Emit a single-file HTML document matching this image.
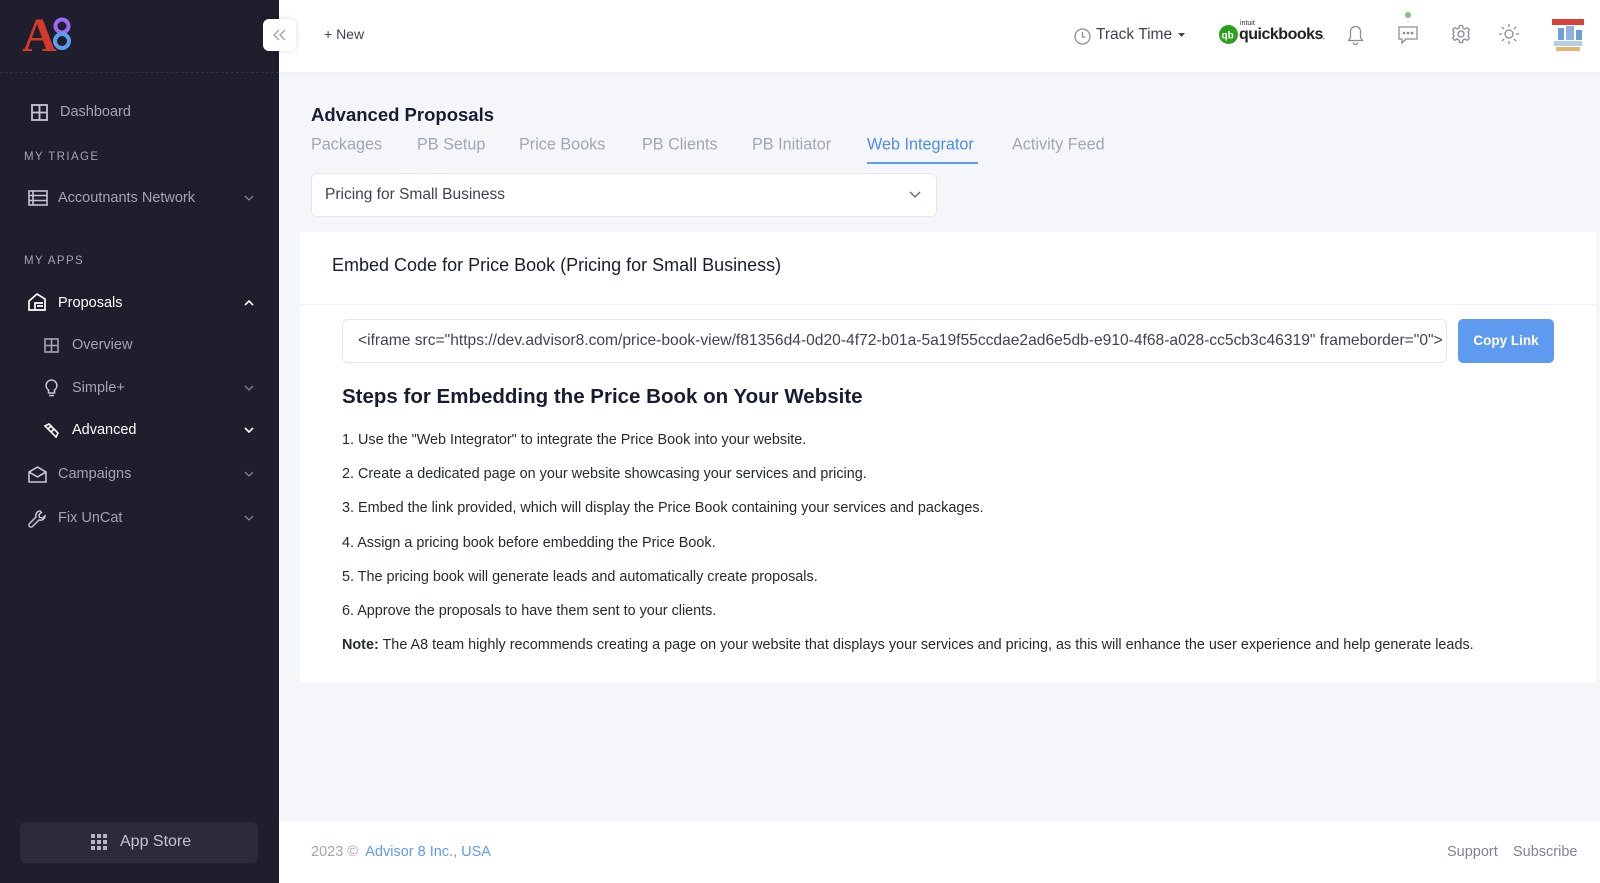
<!DOCTYPE html>
<html><head><meta charset="utf-8"><style>
*{margin:0;padding:0;box-sizing:border-box}
body{width:1600px;height:883px;overflow:hidden;font-family:"Liberation Sans",sans-serif;background:#f5f6f9;position:relative;color:#212529}
.abs{position:absolute;white-space:nowrap}
#sb{position:absolute;left:0;top:0;width:279px;height:883px;background:#1e1e2d}
.nav{position:absolute;font-size:14.5px;color:#a2a3b7;transform:translateY(-50%)}
.sec{position:absolute;font-size:11.5px;letter-spacing:1.4px;color:#a2a3b7;transform:translateY(-50%)}
.chev{position:absolute;left:244px;transform:translateY(-50%)}
.tab{position:absolute;top:145px;transform:translateY(-50%);font-size:16.2px;color:#a1a5b7}
.li{position:absolute;left:342px;font-size:14.4px;color:#252a32;transform:translateY(-50%);white-space:nowrap}
svg{display:block}
</style></head><body>
<div id="sb">
  <div class="abs" style="left:22px;top:8px;font-family:'Liberation Serif',serif;font-size:48px;color:#d33a2c;font-weight:bold">A</div>
  <svg class="abs" style="left:50px;top:17px" width="24" height="34" viewBox="0 0 24 34"><circle cx="12" cy="9" r="6.5" fill="none" stroke="#9b6cf0" stroke-width="4"/><circle cx="12" cy="24" r="7" fill="none" stroke="#5aa0ee" stroke-width="4"/></svg>
  <div style="position:absolute;left:0;top:72px;width:279px;border-top:1px dashed #33344a"></div>
  <svg class="abs" style="left:31px;top:104px" width="17" height="17" viewBox="0 0 17 17" fill="none" stroke="#c4c5d2" stroke-width="1.8"><rect x="1" y="1" width="15" height="15"/><path d="M8.5 1v15M1 8.5h15"/></svg>
  <div class="nav" style="left:60px;top:112px">Dashboard</div>
  <div class="sec" style="left:24px;top:157px">MY TRIAGE</div>
  <svg class="abs" style="left:28px;top:190px" width="20" height="16" viewBox="0 0 20 16" fill="none" stroke="#c4c5d2" stroke-width="1.6"><rect x="1" y="1" width="18" height="14"/><path d="M1 5.5h18M1 10.5h18M5 1v14"/></svg>
  <div class="nav" style="left:58px;top:198px">Accoutnants Network</div>
  <svg class="chev" style="top:198px" width="10" height="6"><path d="M1 1l4 4 4-4" stroke="#7e8299" stroke-width="1.3" fill="none"/></svg>
  <div class="sec" style="left:24px;top:261px">MY APPS</div>
  <svg class="abs" style="left:27px;top:292px" width="20" height="20" viewBox="0 0 20 20" fill="none" stroke="#fff" stroke-width="1.7"><path d="M2 18V9l8-7 8 5v11H2z"/><path d="M8 18v-7h8M10 14h6"/></svg>
  <div class="nav" style="left:58px;top:303px;color:#fff">Proposals</div>
  <svg class="chev" style="top:303px" width="10" height="6"><path d="M1 5l4-4 4 4" stroke="#fff" stroke-width="1.6" fill="none"/></svg>
  <svg class="abs" style="left:44px;top:338px" width="15" height="15" viewBox="0 0 15 15" fill="none" stroke="#a2a3b7" stroke-width="1.6"><rect x="1" y="1" width="13" height="13"/><path d="M7.5 1v13M1 7.5h13"/></svg>
  <div class="nav" style="left:72px;top:345px">Overview</div>
  <svg class="abs" style="left:45px;top:379px" width="13" height="18" viewBox="0 0 13 18" fill="none" stroke="#c4c5d2" stroke-width="1.6"><path d="M6.5 1a5.5 5.5 0 0 0-3 10v3h6v-3a5.5 5.5 0 0 0-3-10zM4 16.5h5"/></svg>
  <div class="nav" style="left:72px;top:388px">Simple+</div>
  <svg class="chev" style="top:388px" width="10" height="6"><path d="M1 1l4 4 4-4" stroke="#7e8299" stroke-width="1.3" fill="none"/></svg>
  <svg class="abs" style="left:43px;top:422px" width="17" height="17" viewBox="0 0 17 17" fill="none" stroke="#fff" stroke-width="1.6"><path d="M2 4l4-2 9 9-2 4z M5 7l3-3M8 10l3-3"/></svg>
  <div class="nav" style="left:72px;top:430px;color:#fff">Advanced</div>
  <svg class="chev" style="top:430px" width="10" height="6"><path d="M1 1l4 4 4-4" stroke="#fff" stroke-width="1.6" fill="none"/></svg>
  <svg class="abs" style="left:28px;top:466px" width="19" height="17" viewBox="0 0 19 17" fill="none" stroke="#c4c5d2" stroke-width="1.6"><path d="M1 6l8.5-5 8.5 5v10H1z M1 6l8.5 5 8.5-5"/></svg>
  <div class="nav" style="left:58px;top:474px">Campaigns</div>
  <svg class="chev" style="top:474px" width="10" height="6"><path d="M1 1l4 4 4-4" stroke="#7e8299" stroke-width="1.3" fill="none"/></svg>
  <svg class="abs" style="left:28px;top:509px" width="19" height="19" viewBox="0 0 19 19" fill="none" stroke="#c4c5d2" stroke-width="1.5"><path d="M12 2a4.5 4.5 0 0 0-4 6L1.5 14.5a2 2 0 0 0 3 3L11 11a4.5 4.5 0 0 0 6-4l-2.5 2-3-.5-.5-3 2.5-2z"/></svg>
  <div class="nav" style="left:58px;top:518px">Fix UnCat</div>
  <svg class="chev" style="top:518px" width="10" height="6"><path d="M1 1l4 4 4-4" stroke="#7e8299" stroke-width="1.3" fill="none"/></svg>
  <div style="position:absolute;left:20px;top:822px;width:238px;height:41px;border-radius:6px;background:#2b2b3c"></div>
  <svg class="abs" style="left:91px;top:834px" width="16" height="16" viewBox="0 0 16 16" fill="#b5b5c3"><rect x="0" y="0" width="4" height="4"/><rect x="6" y="0" width="4" height="4"/><rect x="12" y="0" width="4" height="4"/><rect x="0" y="6" width="4" height="4"/><rect x="6" y="6" width="4" height="4"/><rect x="12" y="6" width="4" height="4"/><rect x="0" y="12" width="4" height="4"/><rect x="6" y="12" width="4" height="4"/><rect x="12" y="12" width="4" height="4"/></svg>
  <div class="nav" style="left:120px;top:842px;font-size:16px;color:#c4c5d2">App Store</div>
</div>
<!-- header -->
<div style="position:absolute;left:279px;top:0;width:1321px;height:72px;background:#fff;box-shadow:0 2px 6px rgba(0,0,0,0.04)"></div>
<div style="position:absolute;left:263px;top:19px;width:33px;height:32px;background:#fff;border-radius:6px;box-shadow:0 0 6px rgba(0,0,0,0.15)"></div>
<svg class="abs" style="left:273px;top:29px" width="14" height="12"><path d="M6 1L1 6l5 5M12 1L7 6l5 5" stroke="#a1a5b7" stroke-width="1.5" fill="none"/></svg>
<div class="abs" style="left:324px;top:26px;font-size:14px;color:#3f4254">+ New</div>
<svg class="abs" style="left:1074px;top:28px" width="17" height="17" viewBox="0 0 17 17" fill="none" stroke="#8a8d99" stroke-width="1.3"><circle cx="8.5" cy="8.5" r="7.5"/><path d="M8.5 4v5h3"/></svg>
<div class="abs" style="left:1096px;top:26px;font-size:15.5px;color:#3f4254">Track Time</div>
<svg class="abs" style="left:1178px;top:33px" width="7" height="4"><path d="M0 0h7L3.5 4z" fill="#3f4254"/></svg>
<svg class="abs" style="left:1219px;top:25px" width="19" height="19"><circle cx="9.5" cy="9.5" r="9.5" fill="#2ca01c"/><text x="2.5" y="13.5" font-size="10" fill="#fff" font-family="Liberation Sans" font-weight="bold">qb</text></svg>
<div class="abs" style="left:1240px;top:20px;font-size:7px;color:#333">intuit</div>
<div class="abs" style="left:1239px;top:26px;font-size:16px;font-weight:bold;color:#222;letter-spacing:-0.5px">quickbooks<span style="font-size:7px">.</span></div>
<svg class="abs" style="left:1347px;top:25px" width="17" height="20" viewBox="0 0 17 20" fill="none" stroke="#8a8d99" stroke-width="1.3"><path d="M8.5 1.5a5 5 0 0 0-5 5v6l-2 3h14l-2-3v-6a5 5 0 0 0-5-5zM6.5 17.5a2 2 0 0 0 4 0"/></svg>
<div class="abs" style="left:1405px;top:12px;width:6px;height:6px;border-radius:3px;background:#7cc47c"></div>
<svg class="abs" style="left:1398px;top:26px" width="20" height="19" viewBox="0 0 20 19" fill="none" stroke="#8a8d99" stroke-width="1.3"><path d="M1 1h18v12H8l-4 4v-4H1z"/><circle cx="6" cy="7" r=".7" fill="#8a8d99"/><circle cx="10" cy="7" r=".7" fill="#8a8d99"/><circle cx="14" cy="7" r=".7" fill="#8a8d99"/></svg>
<svg class="abs" style="left:1451px;top:24px" width="20" height="20" viewBox="0 0 20 20" fill="none" stroke="#8a8d99" stroke-width="1.3"><circle cx="10" cy="10" r="3"/><path d="M8.5 1.5h3l.5 2.5 2 1 2.3-1.3 2 2L17 8l1 2-1 2 1.3 2.3-2 2L14 15l-2 1-.5 2.5h-3L8 16l-2-1-2.3 1.3-2-2L3 12l-1-2 1-2-1.3-2.3 2-2L6 5l2-1z"/></svg>
<svg class="abs" style="left:1499px;top:24px" width="20" height="20" viewBox="0 0 20 20" fill="none" stroke="#8a8d99" stroke-width="1.3"><circle cx="10" cy="10" r="4"/><path d="M10 0v3M10 17v3M0 10h3M17 10h3M2.9 2.9l2.1 2.1M15 15l2.1 2.1M2.9 17.1L5 15M15 5l2.1-2.1"/></svg>
<svg class="abs" style="left:1550px;top:17px" width="36" height="36" viewBox="0 0 36 36"><rect width="36" height="36" fill="#fff"/><path d="M2 2h32v6H2z" fill="#d9443a"/><rect x="8" y="11" width="6" height="12" fill="#6f9fd6"/><rect x="16" y="9" width="8" height="14" fill="#8fb3dc"/><rect x="26" y="13" width="6" height="10" fill="#6f9fd6"/><rect x="4" y="24" width="28" height="5" fill="#b7cde8"/><rect x="6" y="30" width="24" height="4" fill="#e5b26b"/></svg>
<!-- content -->
<div class="abs" style="left:311px;top:104px;font-size:18.5px;font-weight:600;color:#181c32">Advanced Proposals</div>
<div class="tab" style="left:311px">Packages</div>
<div class="tab" style="left:417px">PB Setup</div>
<div class="tab" style="left:519px">Price Books</div>
<div class="tab" style="left:642px">PB Clients</div>
<div class="tab" style="left:752px">PB Initiator</div>
<div class="tab" style="left:867px;color:#4d8de6">Web Integrator</div>
<div style="position:absolute;left:867px;top:162px;width:111px;height:2px;background:#5b9bf0"></div>
<div class="tab" style="left:1012px">Activity Feed</div>
<div style="position:absolute;left:311px;top:173px;width:626px;height:44px;background:#fff;border:1px solid #e4e6ef;border-radius:6px"></div>
<div class="abs" style="left:325px;top:186px;font-size:15.5px;color:#3f4254">Pricing for Small Business</div>
<svg class="abs" style="left:909px;top:191px" width="12" height="7"><path d="M1 1l5 5 5-5" stroke="#5e6278" stroke-width="1.3" fill="none"/></svg>
<div style="position:absolute;left:300px;top:232px;width:1296px;height:451px;background:#fff"></div>
<div style="position:absolute;left:300px;top:304px;width:1296px;border-top:1px solid #eff2f5"></div>
<div class="abs" style="left:332px;top:255px;font-size:18px;color:#181c32">Embed Code for Price Book (Pricing for Small Business)</div>
<div style="position:absolute;left:342px;top:319px;width:1105px;height:44px;border:1px solid #e4e6ef;border-radius:6px;overflow:hidden;background:#fff">
<div class="abs" style="left:15px;top:12px;font-size:15.6px;color:#3f4254">&lt;iframe src="https://dev.advisor8.com/price-book-view/f81356d4-0d20-4f72-b01a-5a19f55ccdae2ad6e5db-e910-4f68-a028-cc5cb3c46319" frameborder="0"&gt;</div></div>
<div style="position:absolute;left:1458px;top:319px;width:96px;height:44px;background:#5e9bf0;border-radius:5px;color:#fff;font-size:13.5px;font-weight:bold;text-align:center;line-height:44px">Copy Link</div>
<div class="abs" style="left:342px;top:385px;font-size:20.5px;font-weight:600;color:#181c32">Steps for Embedding the Price Book on Your Website</div>
<div class="li" style="top:440px">1. Use the "Web Integrator" to integrate the Price Book into your website.</div>
<div class="li" style="top:474px">2. Create a dedicated page on your website showcasing your services and pricing.</div>
<div class="li" style="top:508px">3. Embed the link provided, which will display the Price Book containing your services and packages.</div>
<div class="li" style="top:543px">4. Assign a pricing book before embedding the Price Book.</div>
<div class="li" style="top:577px">5. The pricing book will generate leads and automatically create proposals.</div>
<div class="li" style="top:611px">6. Approve the proposals to have them sent to your clients.</div>
<div class="li" style="top:645px"><b>Note:</b> The A8 team highly recommends creating a page on your website that displays your services and pricing, as this will enhance the user experience and help generate leads.</div>
<!-- footer -->
<div style="position:absolute;left:279px;top:821px;width:1321px;height:62px;background:#fff"></div>
<div class="abs" style="left:311px;top:844px;font-size:14.5px;color:#a1a5b7">2023 ©&nbsp; <span style="color:#5e9bf0">Advisor 8 Inc., USA</span></div>
<div class="abs" style="left:1447px;top:844px;font-size:14.5px;color:#7e8299">Support</div>
<div class="abs" style="left:1513px;top:844px;font-size:14.5px;color:#7e8299">Subscribe</div>
</body></html>
